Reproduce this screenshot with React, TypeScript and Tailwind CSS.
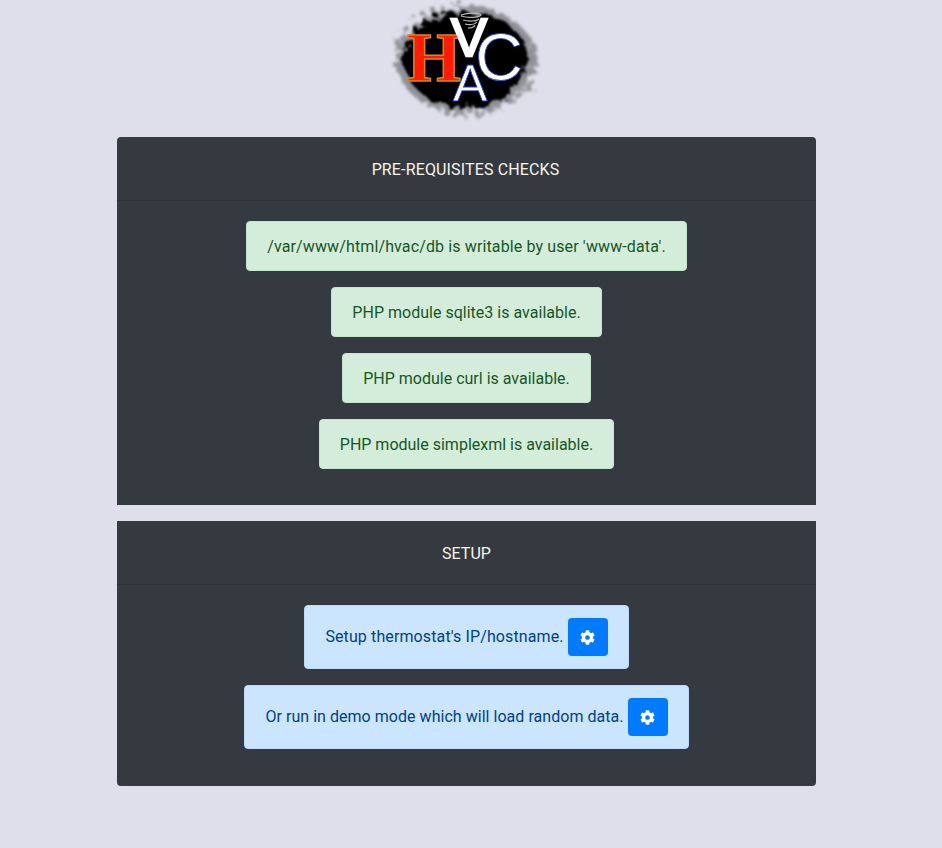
import { FaCog } from "react-icons/fa";

function Logo() {
  return (
    <svg width="170" height="125" viewBox="0 0 170 125" className="block mx-auto">
      <defs>
        <filter id="rough" x="-20%" y="-20%" width="140%" height="140%">
          <feTurbulence type="fractalNoise" baseFrequency="0.11" numOctaves="3" seed="4" />
          <feDisplacementMap in="SourceGraphic" scale="16" />
          <feGaussianBlur stdDeviation="1" />
        </filter>
        <filter id="halo" x="-20%" y="-20%" width="140%" height="140%">
          <feTurbulence type="fractalNoise" baseFrequency="0.16" numOctaves="3" seed="11" />
          <feDisplacementMap in="SourceGraphic" scale="24" />
          <feGaussianBlur stdDeviation="1.6" />
        </filter>
        <filter id="soft">
          <feGaussianBlur stdDeviation="0.5" />
        </filter>
      </defs>
      <ellipse cx="84" cy="60" rx="70" ry="54" fill="#000" opacity="0.35" filter="url(#halo)" />
      <ellipse cx="84" cy="60" rx="62" ry="48" fill="#000" filter="url(#rough)" />
      {/* tornado */}
      <g fill="none" stroke="#b8b8b8" strokeWidth="1.2" filter="url(#soft)">
        <path d="M79 15c8-3 19-2 20 0-3 3-14 3-20 1" />
        <path d="M81 20c6 2 14 1 16-1" />
        <path d="M83 24c4 1 10 1 12-2" />
        <path d="M86 28c2 0 6 0 7-3" />
      </g>
      <g textAnchor="middle" filter="url(#soft)">
        <text x="52" y="81" fontFamily="'Liberation Serif', serif" fontSize="70" fontWeight="700" fill="#ff1a00" stroke="#d08a20" strokeWidth="1.5">H</text>
        <text x="87" y="56" fontFamily="'Liberation Sans', sans-serif" fontSize="54" fill="#fff" stroke="#fff" strokeWidth="2.5">V</text>
        <text x="117" y="80" fontFamily="'Liberation Sans', sans-serif" fontSize="66" fill="#fff" stroke="#3344dd" strokeWidth="0.8">C</text>
        <text x="88" y="101" fontFamily="'Liberation Sans', sans-serif" fontSize="52" fill="#fff" stroke="#2233ee" strokeWidth="0.8">A</text>
      </g>
    </svg>
  );
}

function Alert({ tone, className, children }: { tone: "success" | "primary"; className?: string; children: React.ReactNode }) {
  const cls =
    tone === "success"
      ? "bg-[#d4edda] border-[#c3e6cb] text-[#155724] pt-[13px] pb-[11px]"
      : "bg-[#cce5ff] border-[#b8daff] text-[#004085] py-3";
  return (
    <div className={`flex items-center gap-1 border rounded px-5 leading-6 ${cls} ${className ?? ""}`}>{children}</div>
  );
}

function GearButton() {
  return (
    <button className="flex items-center justify-center w-10 h-[38px] rounded bg-[#007bff] text-white tracking-normal">
      <FaCog className="w-[15px] h-[15px]" />
    </button>
  );
}

function Card({ title, rounded, className, bodyClass, children }: { title: string; rounded: string; className?: string; bodyClass: string; children: React.ReactNode }) {
  return (
    <div className={`bg-[#343a40] ${rounded}`}>
      <div className="h-16 flex items-center justify-center pt-[2px] border-b border-black/[0.125] text-[#f8f4e8]">
        <span className={className}>{title}</span>
      </div>
      <div className={`flex flex-col items-center gap-4 px-5 pt-5 ${bodyClass}`}>{children}</div>
    </div>
  );
}

export default function App() {
  return (
    <div className="min-h-[848px] bg-[#dfdfeb] text-base" style={{ fontFamily: "Roboto, sans-serif" }}>
      <div className="w-[933px]">
        <div className="h-[137px]">
          <Logo />
        </div>
        <div className="w-[699px] ml-[117px] flex flex-col gap-4">
          <Card title="PRE-REQUISITES CHECKS" rounded="rounded-t" className="tracking-[0.14px] pr-[2px]" bodyClass="pb-9">
            <Alert tone="success" className="tracking-[0.125px]">/var/www/html/hvac/db is writable by user 'www-data'.</Alert>
            <Alert tone="success" className="tracking-[0.015px]">PHP module sqlite3 is available.</Alert>
            <Alert tone="success">PHP module curl is available.</Alert>
            <Alert tone="success">PHP module simplexml is available.</Alert>
          </Card>
          <Card title="SETUP" rounded="rounded-b" bodyClass="pb-[37px]">
            <Alert tone="primary" className="tracking-[0.115px]">
              <span>Setup thermostat's IP/hostname.</span>
              <GearButton />
            </Alert>
            <Alert tone="primary" className="tracking-[0.035px]">
              <span>Or run in demo mode which will load random data.</span>
              <GearButton />
            </Alert>
          </Card>
        </div>
      </div>
    </div>
  );
}
